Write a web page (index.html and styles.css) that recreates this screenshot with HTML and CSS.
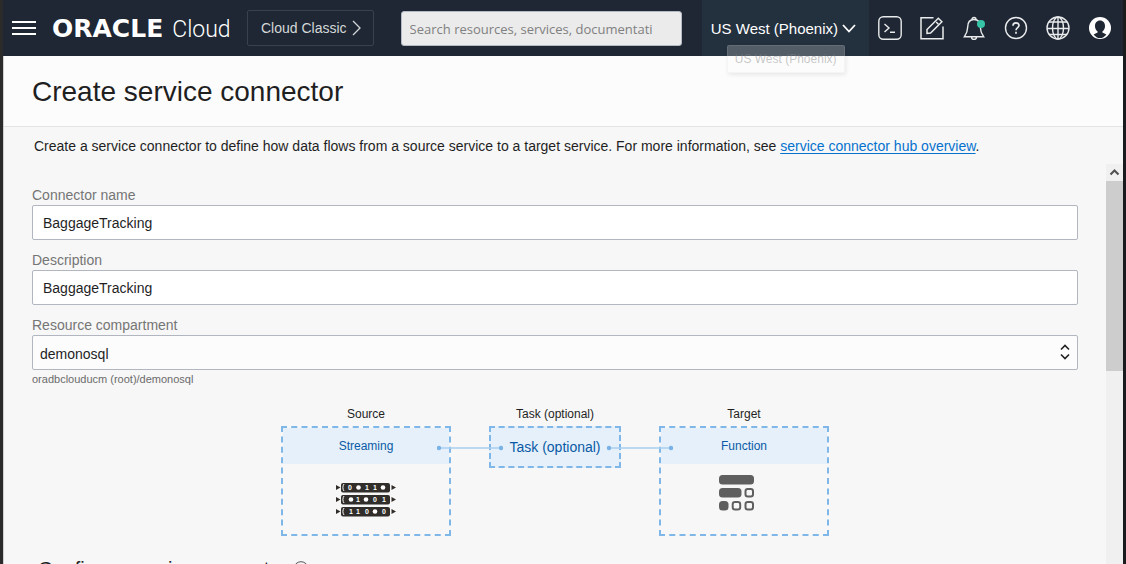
FILE: index.html
```html
<!DOCTYPE html>
<html lang="en">
<head>
<meta charset="utf-8">
<title>Create service connector</title>
<link rel="stylesheet" href="styles.css">
</head>
<body>
<div class="app">
  <header class="topbar">
    <button class="icon-btn menu" type="button" aria-label="Menu">
      <svg width="24" height="16" viewBox="0 0 24 16"><path d="M0 2h24M0 8h24M0 14h24" stroke="#fff" stroke-width="2"/></svg>
    </button>
    <a class="logo" href="#"><span class="logo-name">ORACLE</span><span class="logo-cloud">Cloud</span></a>
    <button class="classic" type="button">Cloud Classic
      <svg width="9" height="16" viewBox="0 0 9 16" fill="none" stroke="#d5d7d9" stroke-width="1.3"><path d="M1 1l7 7-7 7"/></svg>
    </button>
    <input class="search" type="text" aria-label="Search" placeholder="Search resources, services, documentati">
    <div class="region-wrap">
      <button class="region" type="button">US West (Phoenix)
        <svg width="14" height="9" viewBox="0 0 14 9" fill="none" stroke="#fff" stroke-width="1.8"><path d="M1 1l6 6.500 6-6.500"/></svg>
      </button>
      <div class="tooltip" role="tooltip">US West (Phoenix)</div>
    </div>
    <nav class="tools" aria-label="Tools">
      <button class="icon-btn" type="button" aria-label="Cloud Shell">
        <svg width="24" height="24" viewBox="0 0 24 24" fill="none" stroke="#e9ebec" stroke-width="1.4"><rect x=".8" y=".8" width="22.400" height="22.400" rx="4.500"/><path d="M6.500 8l4.500 4-4.500 4M12 16.300h5"/></svg>
      </button>
      <button class="icon-btn" type="button" aria-label="Edit">
        <svg width="24" height="24" viewBox="0 0 24 24" fill="none" stroke="#e9ebec" stroke-width="1.500"><path d="M13.500 1.700H1v21h22V10.500"/><path d="M7 13.500L18.300 2.200l3.600 3.600L10.600 17.100 7 17.500z"/><path d="M16.200 6l2.200 2.200"/></svg>
      </button>
      <button class="icon-btn" type="button" aria-label="Announcements">
        <svg width="24" height="24" viewBox="0 0 24 24" fill="none" stroke="#e9ebec" stroke-width="1.400"><path d="M10 3.500a2 2 0 1 1 4 0M2.300 20.800c2.300-3.300 3.400-5.500 3.400-9.800C5.700 6 8 3.500 12 3.500s6.300 2.500 6.300 7.500c0 4.300 1.100 6.500 3.400 9.800zM9.500 21a2.500 2.500 0 0 0 5 0"/><circle cx="19" cy="8" r="4" fill="#36c3a6" stroke="none"/></svg>
      </button>
      <button class="icon-btn" type="button" aria-label="Help">
        <svg width="24" height="24" viewBox="0 0 24 24" fill="none" stroke="#e9ebec" stroke-width="1.400"><circle cx="12" cy="12" r="10.500"/><path stroke-width="1.700" d="M9 9.700C9 5.900 15 6 15 9.500c0 2-3 2.300-3 4.800M12 15.700v2"/></svg>
      </button>
      <button class="icon-btn" type="button" aria-label="Language">
        <svg width="24" height="24" viewBox="0 0 24 24" fill="none" stroke="#e9ebec" stroke-width="1.400"><circle cx="12" cy="12" r="11"/><ellipse cx="12" cy="12" rx="5.500" ry="11"/><path d="M12 1v22M1 12.500h22M3 6h18M3 18.500h18"/></svg>
      </button>
      <button class="icon-btn" type="button" aria-label="Profile">
        <svg width="24" height="24" viewBox="0 0 24 24"><circle cx="12" cy="12" r="11" fill="#fff"/><path fill="#1e2733" d="M12 4.500c3 0 5 2.300 5 5.500 0 2.500-1 4.500-2.600 5.500v1l4 1.900C16.500 20.800 14.500 22 12 22s-4.500-1.200-6.400-3.600l4-1.900v-1C8 14.500 7 12.500 7 10c0-3.200 2-5.500 5-5.500z"/></svg>
      </button>
    </nav>
  </header>

  <main class="panel">
    <div class="title-bar"><h1>Create service connector</h1></div>
    <p class="intro">Create a service connector to define how data flows from a source service to a target service. For more information, see <a href="#">service connector hub overview</a>.</p>
    <div class="scroll-area">
      <form class="form">
        <div class="field">
          <label for="name">Connector name</label>
          <input id="name" class="control" type="text" value="BaggageTracking">
        </div>
        <div class="field">
          <label for="description">Description</label>
          <input id="description" class="control" type="text" value="BaggageTracking">
        </div>
        <div class="field">
          <label for="compartment">Resource compartment</label>
          <div class="select-wrap">
            <select id="compartment" class="control select"><option>demonosql</option></select>
            <svg class="select-arrows" width="10" height="16" viewBox="0 0 10 16" fill="none" stroke="#222" stroke-width="1.600"><path d="M1 5.500l4-4 4 4M1 10.500l4 4 4-4"/></svg>
          </div>
          <div class="hint">oradbclouducm (root)/demonosql</div>
        </div>

        <div class="flow">
          <div class="step">
            <div class="step-label">Source</div>
            <div class="box">
              <div class="box-head">Streaming</div>
              <div class="box-body">
                <svg class="stream" width="60" height="36" viewBox="0 0 60 36">
                  <g fill="#312d2a"><rect x="5" y="1" width="49" height="9.500" rx="2"/><rect x="5" y="13" width="49" height="9.500" rx="2"/><rect x="5" y="25" width="49" height="9.500" rx="2"/>
                  <path d="M0 3l4.500 2.500L0 8zM0 15l4.500 2.500L0 20zM0 27l4.500 2.500L0 32zM55.500 3l4.500 2.500L55.500 8zM55.500 15l4.500 2.500-4.500 2.500zM55.500 27l4.500 2.500-4.500 2.500z"/></g>
                  <path d="M8 2c-1.500 2-1.500 5 0 7M8 14c-1.500 2-1.500 5 0 7M8 26c-1.500 2-1.500 5 0 7" fill="none" stroke="#fff"/>
                  <g fill="#fff"><circle cx="22.500" cy="5.500" r="2.300"/><circle cx="47" cy="5.500" r="2.300"/><circle cx="15" cy="17.500" r="2.300"/><circle cx="30" cy="17.500" r="2.300"/><circle cx="39" cy="29.500" r="2.300"/>
                  <text x="14" y="8">0</text><text x="31" y="8">1</text><text x="39" y="8">1</text>
                  <text x="22" y="20">1</text><text x="39" y="20">0</text><text x="48" y="20">1</text>
                  <text x="15" y="32">1</text><text x="22" y="32">1</text><text x="31" y="32">0</text><text x="48" y="32">0</text></g>
                </svg>
              </div>
            </div>
          </div>
          <div class="step step-task">
            <div class="step-label">Task (optional)</div>
            <div class="box box-task">Task (optional)</div>
            <svg class="link link-in" width="66" height="6" viewBox="0 0 66 6"><path d="M2 3h62" stroke="#a9cff0" stroke-width="1.600"/><circle cx="2" cy="3" r="2.200" fill="#7ab3e6"/><circle cx="64" cy="3" r="2.200" fill="#7ab3e6"/></svg>
            <svg class="link link-out" width="66" height="6" viewBox="0 0 66 6"><path d="M2 3h62" stroke="#a9cff0" stroke-width="1.600"/><circle cx="2" cy="3" r="2.200" fill="#7ab3e6"/><circle cx="64" cy="3" r="2.200" fill="#7ab3e6"/></svg>
          </div>
          <div class="step">
            <div class="step-label">Target</div>
            <div class="box">
              <div class="box-head">Function</div>
              <div class="box-body box-body-fn">
                <svg width="35" height="36" viewBox="0 0 35 36"><g fill="#5f5f5f"><rect width="35" height="9.500" rx="3.500"/><rect y="13" width="22.500" height="9.500" rx="3.500"/><rect y="26" width="9.500" height="9.500" rx="3.500"/></g><g fill="none" stroke="#5f5f5f" stroke-width="2"><rect x="26.500" y="14" width="7.500" height="7.500" rx="2.300"/><rect x="13.700" y="27" width="7.500" height="7.500" rx="2.300"/><rect x="26.500" y="27" width="7.500" height="7.500" rx="2.300"/></g></svg>
              </div>
            </div>
          </div>
        </div>

        <h2 class="section">Configure service connector
          <svg width="16" height="16" viewBox="0 0 16 16" fill="none" stroke="#555"><circle cx="8" cy="8" r="7.300"/><path d="M8 7v5M8 4v1.500"/></svg>
        </h2>
      </form>
      <div class="scrollbar" aria-hidden="true">
        <svg width="17" height="17" viewBox="0 0 17 17" fill="none" stroke="#505050" stroke-width="2"><path d="M4.500 10.500l4-4 4 4"/></svg>
        <div class="thumb"></div>
      </div>
    </div>
  </main>
</div>
</body>
</html>
```

FILE: styles.css
```css
* { box-sizing: border-box; }

body {
  margin: 0;
  height: 100vh;
  overflow: hidden;
  border-left: 3px solid #2b2b2b;
  border-right: 3px solid #1a1b1c;
  font-family: "Liberation Sans", Arial, sans-serif;
  font-size: 14px;
  color: #1f1f1f;
  background: #f7f7f7;
}

button, input, select { font: inherit; }
button { cursor: pointer; }

.app {
  height: 100%;
  display: flex;
  flex-direction: column;
}

/* Top bar */
.topbar {
  flex: none;
  display: flex;
  align-items: center;
  height: 56px;
  padding: 0 11px 0 9px;
  background: #1e2733;
}

.icon-btn {
  display: flex;
  padding: 0;
  border: 0;
  background: none;
}

.logo {
  display: flex;
  align-items: baseline;
  gap: 9px;
  width: 194px;
  padding-left: 16px;
  color: #fff;
  text-decoration: none;
  line-height: 32px;
}

.logo-name { font: bold 25px "DejaVu Sans", sans-serif; }
.logo-cloud { font: 300 23px Roboto, sans-serif; }

.classic {
  display: flex;
  align-items: center;
  gap: 5px;
  flex: none;
  height: 36px;
  padding: 0 12px 0 13px;
  margin-left: 17px;
  border: 1px solid #38424e;
  border-radius: 2px;
  background: none;
  color: #d5d7d9;
}

.search {
  flex: 1;
  min-width: 0;
  height: 35px;
  margin: 0 20px 0 27px;
  padding: 2px 8px 0;
  border: 1px solid #b4bac4;
  border-radius: 3px;
  background: #ebebeb;
  font-family: "Open Sans", sans-serif;
  font-size: 13px;
}

.search::placeholder { color: #808080; opacity: 1; }

.region-wrap {
  position: relative;
  align-self: stretch;
  flex: none;
  margin-right: 9px;
}

.region {
  display: flex;
  align-items: center;
  gap: 4px;
  height: 100%;
  padding: 0 13px 0 9px;
  border: 0;
  background: #23303e;
  color: #fff;
  font-size: 15px;
}

.tooltip {
  position: absolute;
  top: 45px;
  left: 25px;
  padding: 0 7px;
  border: 1px solid rgba(200, 200, 200, 0.15);
  border-radius: 2px;
  background: rgba(255, 255, 255, 0.22);
  box-shadow: 1px 2px 4px rgba(0, 0, 0, 0.08);
  color: rgba(130, 130, 130, 0.45);
  font-size: 12px;
  line-height: 26px;
  white-space: nowrap;
}

.tools { display: flex; gap: 18px; flex: none; }

/* Panel */
.panel {
  flex: 1;
  min-height: 0;
  display: flex;
  flex-direction: column;
  border-left: 1px solid #d0d0d0;
}

.title-bar {
  flex: none;
  padding: 20px 28px 18px;
  border-bottom: 1px solid #e3e3e3;
  background: #fcfcfc;
}

h1 {
  margin: 0;
  font-size: 28px;
  line-height: 32px;
  font-weight: normal;
}

.intro {
  flex: none;
  margin: 0;
  padding: 9px 30px 8px;
  line-height: 20px;
}

.intro a { color: #0572ce; text-underline-offset: 2px; }

.scroll-area {
  flex: 1;
  min-height: 0;
  display: flex;
}

.form {
  flex: 1;
  min-width: 0;
  overflow: hidden;
  padding: 22px 28px 0;
}

.field { margin-bottom: 11px; }

.field label {
  display: block;
  color: #757575;
  line-height: 19px;
}

.control {
  display: block;
  width: 100%;
  height: 35px;
  padding: 0 10px;
  border: 1px solid #b1b6c0;
  border-radius: 2px;
  background: #fff;
  color: #1f1f1f;
}

.select-wrap { position: relative; }
.select { appearance: none; padding: 2px 7px 0; background: #fcfcfc; }

.select-arrows {
  position: absolute;
  top: 9px;
  right: 8px;
  pointer-events: none;
}

.hint {
  color: #6b6b6b;
  font-size: 11px;
  line-height: 18px;
}

/* Connector flow */
.flow {
  display: flex;
  justify-content: center;
  gap: 38px;
}

.step { width: 170px; text-align: center; }
.step-task { position: relative; width: 132px; }

.step-label {
  font-size: 12px;
  line-height: 16px;
  padding: 7px 0 4px;
}

.box {
  height: 110px;
  border: 2px dashed #7fb7e8;
}

.box-head, .box-task {
  background: #e5f0fa;
  color: #0a5aa5;
}

.box-head { font-size: 12px; line-height: 36px; }
.box-task { height: 42px; line-height: 38px; }
.box-body { display: flex; justify-content: center; padding-top: 18px; }
.box-body-fn { padding: 11px 15px 0 0; }
.stream text { font: bold 7px "Liberation Sans", sans-serif; text-anchor: middle; }

.link { position: absolute; top: 46px; }
.link-in { right: 118px; }
.link-out { left: 118px; }

.section {
  display: flex;
  align-items: center;
  gap: 6px;
  margin: 21px 0 0;
  padding-left: 6px;
  font-size: 20px;
  line-height: 24px;
  font-weight: normal;
}

/* Scrollbar */
.scrollbar {
  flex: none;
  width: 17px;
  background: #f0f0f0;
}

.scrollbar svg { display: block; }
.thumb { height: 190px; background: #cdcdcd; }
```
